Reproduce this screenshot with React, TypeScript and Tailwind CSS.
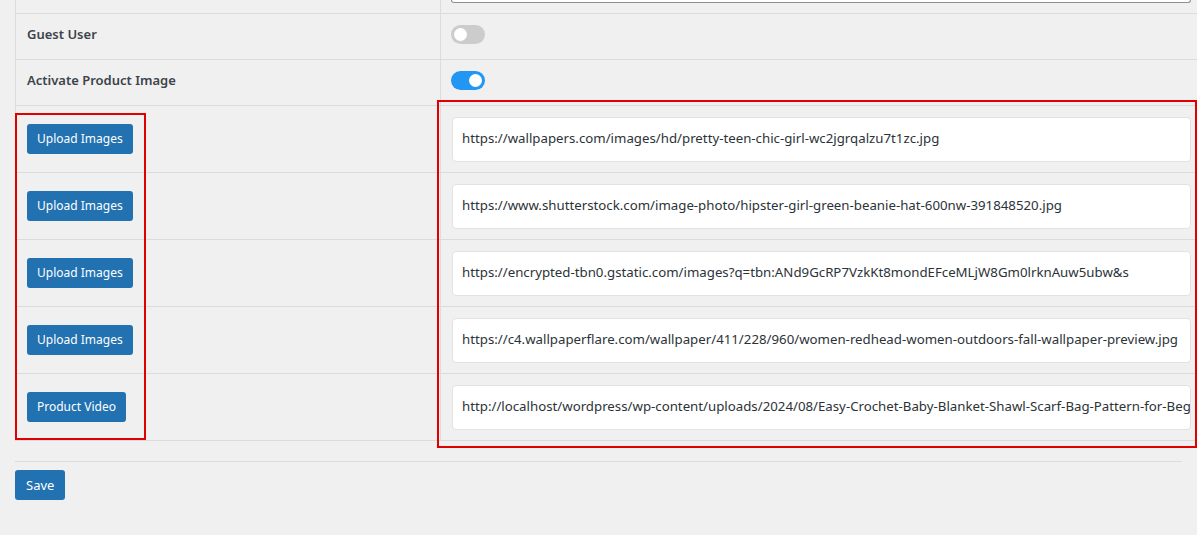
import React from 'react';

const URLS = [
  'https://wallpapers.com/images/hd/pretty-teen-chic-girl-wc2jgrqalzu7t1zc.jpg',
  'https://www.shutterstock.com/image-photo/hipster-girl-green-beanie-hat-600nw-391848520.jpg',
  'https://encrypted-tbn0.gstatic.com/images?q=tbn:ANd9GcRP7VzkKt8mondEFceMLjW8Gm0lrknAuw5ubw&s',
  'https://c4.wallpaperflare.com/wallpaper/411/228/960/women-redhead-women-outdoors-fall-wallpaper-preview.jpg',
  'http://localhost/wordpress/wp-content/uploads/2024/08/Easy-Crochet-Baby-Blanket-Shawl-Scarf-Bag-Pattern-for-Beginners.mp4',
];

function Toggle({ on }: { on: boolean }) {
  return (
    <div
      className={`w-[34px] h-[19px] rounded-full flex items-center px-[3px] ${
        on ? 'bg-[#2196f3] justify-end' : 'bg-[#cccccc] justify-start'
      }`}
    >
      <div className="w-[13px] h-[13px] rounded-full bg-white" />
    </div>
  );
}

function BlueButton({ label }: { label: string }) {
  return (
    <button className="h-[30px] px-[10px] rounded-[3px] bg-[#2271b1] text-white text-[12px] leading-none">
      {label}
    </button>
  );
}

export default function App() {
  return (
    <div
      className="relative w-[1197px] h-[535px] overflow-hidden bg-[#f0f0f1] text-[#1d2327]"
      style={{ fontFamily: '"Noto Sans", "Open Sans", Arial, sans-serif' }}
    >
      {/* settings table */}
      <div className="ml-[15px] w-[1200px] border-l border-[#dcdcde]">
        {/* tail of the previous row */}
        <div className="flex h-[14px] border-b border-[#dcdcde]">
          <div className="w-[425px] shrink-0 border-r border-[#dcdcde]" />
          <div className="pl-[10px]">
            <div className="w-[740px] h-[3px] bg-white border-b border-x border-[#8c8f94] rounded-b-[4px]" />
          </div>
        </div>

        <div className="flex h-[46px] border-b border-[#dcdcde]">
          <div className="w-[425px] shrink-0 border-r border-[#dcdcde] flex items-center pl-[11px] pb-[3px] text-[13px] font-semibold text-[#3c434a]">
            Guest User
          </div>
          <div className="flex items-center pl-[10px] pb-[4px]">
            <Toggle on={false} />
          </div>
        </div>

        <div className="flex h-[46px] border-b border-[#dcdcde]">
          <div className="w-[425px] shrink-0 border-r border-[#dcdcde] flex items-center pl-[11px] pb-[3px] text-[13px] font-semibold text-[#3c434a]">
            Activate Product Image
          </div>
          <div className="flex items-center pl-[10px] pb-[4px]">
            <Toggle on={true} />
          </div>
        </div>

        {URLS.map((url, i) => (
          <div key={i} className="flex h-[67px] border-b border-[#dcdcde]">
            <div className="w-[425px] shrink-0 border-r border-[#dcdcde] flex items-center pl-[11px]">
              <BlueButton label={i === 4 ? 'Product Video' : 'Upload Images'} />
            </div>
            <div className="flex items-center pl-[11px]">
              <div className="w-[739px] h-[45px] bg-white border border-[#e2e2e4] rounded-[4px] flex items-center px-[9px] overflow-hidden">
                <span className="whitespace-nowrap text-[13.25px] text-[#2c3338]">{url}</span>
              </div>
            </div>
          </div>
        ))}
      </div>

      {/* footer */}
      <div className="mx-[15px] mt-[20px] border-t border-[#dcdcde] pt-[8px]">
        <button className="h-[30px] px-[11px] rounded-[3px] bg-[#2271b1] text-white text-[13px] leading-none">
          Save
        </button>
      </div>

      {/* red highlight boxes */}
      <div className="absolute left-[15px] top-[113px] w-[131px] h-[327px] border-2 border-[#e00000] pointer-events-none" />
      <div className="absolute left-[437px] top-[100px] w-[760px] h-[348px] border-2 border-[#e00000] pointer-events-none" />
    </div>
  );
}
